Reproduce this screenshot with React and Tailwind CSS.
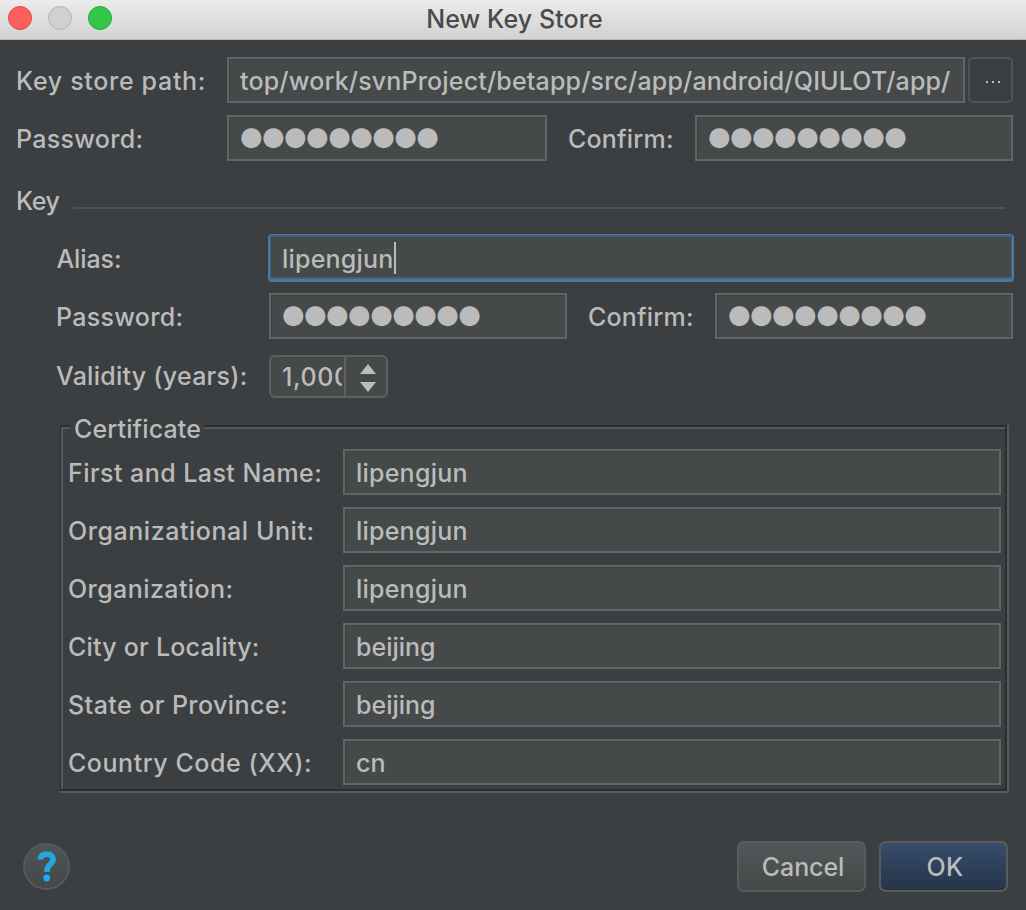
const FIELD =
  "flex h-[46px] items-center overflow-hidden whitespace-nowrap border-2 border-[#646464] bg-[#45494a] pl-[11px] pt-0.5 shadow-[inset_1px_1px_0_#3e4243]";

function Field({ className, children }) {
  return <div className={`${FIELD} ${className}`}>{children}</div>;
}

function Dots() {
  return (
    <span className="-mt-[6px] font-['DejaVu_Sans',sans-serif] text-[26px] leading-[30px] tracking-[-0.65px]">
      ●●●●●●●●●
    </span>
  );
}

function Label({ className, children }) {
  return <span className={`shrink-0 whitespace-pre ${className}`}>{children}</span>;
}

const CERT_ROWS = [
  ["First and Last Name:", "tracking-[0.45px] pl-[5px]", "lipengjun", "tracking-[0.22px]"],
  ["Organizational Unit:", "tracking-[0.55px] pl-[5px]", "lipengjun", "tracking-[0.22px]"],
  ["Organization:", "tracking-[0.42px] pl-[5px]", "lipengjun", "tracking-[0.22px]"],
  ["City or Locality:", "tracking-[0.22px] pl-[5px]", "beijing", "tracking-[0px]"],
  ["State or Province:", "tracking-[0.43px] pl-[5px]", "beijing", "tracking-[0px]"],
  ["Country Code (XX):", "tracking-[0.54px] pl-[5px]", "cn", "tracking-[0px]"],
];

function TitleBar() {
  return (
    <header className="grid h-10 grid-cols-[1fr_auto_1fr] border-b border-[#b4b4b4] bg-linear-to-b from-[#ebebeb] to-[#d2d2d2]">
      <div className="flex gap-4 pl-2 pt-1.5">
        <span className="size-6 rounded-full border border-[#e2463f] bg-[#fc605b]" />
        <span className="size-6 rounded-full border border-[#b4b4b4] bg-[#d0d0d0]" />
        <span className="size-6 rounded-full border border-[#1fa833] bg-[#34c84a]" />
      </div>
      <h1 className="pl-[3px] font-[450] leading-[39px] tracking-[0.1px] text-[#4a4a4a]">New Key Store</h1>
    </header>
  );
}

function Certificate() {
  return (
    <section className="relative ml-[60px] mt-[27px] h-[368px] w-[949px] border-b-2 border-r-2 border-[#555a5c]">
      <div className="h-full border-2 border-l border-[#2b2d2e]">
        <div className="flex h-full flex-col gap-3 border-l-2 border-t-2 border-[#555a5c] pt-5">
          {CERT_ROWS.map(([label, labelClass, value, valueClass]) => (
            <div key={label} className="flex items-center">
              <Label className={`mt-0.5 w-[280px] ${labelClass}`}>{label}</Label>
              <Field className={`w-[658px] ${valueClass}`}>{value}</Field>
            </div>
          ))}
        </div>
      </div>
      <h2 className="absolute left-[10px] -top-[11px] w-[134px] bg-[#3c3f41] pl-[4px] font-[450] tracking-[0.13px]">
        Certificate
      </h2>
    </section>
  );
}

export default function App() {
  return (
    <div className="flex h-[910px] w-[1026px] flex-col overflow-hidden bg-[#3c3f41] font-[Inter,sans-serif] text-[25px] font-[450] leading-[30px] text-[#bbbbbb]">
      <TitleBar />
      <main className="flex flex-col pt-[17px]">
        <div className="flex items-center pl-4">
          <Label className="mt-0.5 w-[211px] tracking-[0.68px]">Key store path:</Label>
          <Field className="w-[738px] tracking-[0.16px]">
            top/work/svnProject/betapp/src/app/android/QIULOT/app/
          </Field>
          <button className="ml-[3px] flex h-[46px] w-[45px] items-center justify-center gap-1 rounded-[5px] border-2 border-[#515354] pl-1 pt-1">
            <span className="size-0.5 bg-[#bbbbbb]" />
            <span className="size-0.5 bg-[#bbbbbb]" />
            <span className="size-0.5 bg-[#bbbbbb]" />
          </button>
        </div>
        <div className="mt-3 flex items-center pl-4">
          <Label className="mt-0.5 w-[211px] tracking-[0.3px]">Password:</Label>
          <Field className="w-[320px]"><Dots /></Field>
          <Label className="mt-0.5 w-[148px] pl-[21px] tracking-[0.2px]">Confirm:</Label>
          <Field className="w-[318px]"><Dots /></Field>
        </div>

        <div className="mt-[25px] flex h-[30px] items-center pl-4">
          <Label className="w-[57px] tracking-[-0.5px]">Key</Label>
          <div className="mt-[13px] h-0.5 w-[932px] bg-[#515151]" />
        </div>

        <div className="mt-[18px] flex items-center pl-[56.5px]">
          <Label className="mt-0.5 w-[211.5px] tracking-[-0.1px]">Alias:</Label>
          <div className="h-12 w-[746px] rounded-[4px] border-x-2 border-b-[3px] border-t border-[#4a78a8] bg-[#45494a]">
            <div className="flex h-full items-center border-x border-y-2 border-[#466173] pl-[11px]">
              <span className="mt-[3px] tracking-[0.2px]">lipengjun</span>
              <span className="mt-px h-8 w-0.5 bg-[#bbbbbb]" />
            </div>
          </div>
        </div>
        <div className="mt-[11px] flex items-center pl-14">
          <Label className="mt-0.5 w-[213px] tracking-[0.3px]">Password:</Label>
          <Field className="w-[298px]"><Dots /></Field>
          <Label className="mt-0.5 w-[148px] pl-[21px] tracking-[0.2px]">Confirm:</Label>
          <Field className="w-[298px]"><Dots /></Field>
        </div>
        <div className="mt-4 flex items-center pl-14">
          <Label className="-mt-px w-[213px] tracking-[0.26px]">Validity (years):</Label>
          <div className="flex h-[43px] w-[119px] rounded-[6px] border-2 border-[#5f6060] bg-[#45494a]">
            <div className="w-[71px] overflow-hidden pl-[11px] leading-[41px] tracking-[0.6px]">1,000</div>
            <div className="ml-[2px] flex flex-1 items-center justify-center border-l-2 border-[#5e6060] pl-[4px] pt-0.5">
              <svg width="16" height="28" viewBox="0 0 16 28" fill="#bbbbbb">
                <path d="M8 0 16 10H0ZM0 18H16L8 28Z" />
              </svg>
            </div>
          </div>
        </div>

        <Certificate />
      </main>

      <footer className="mt-12 flex items-center pl-[23px] pr-[18px]">
        <button className="flex size-[47px] items-center justify-center rounded-full border-2 border-[#565959] bg-linear-to-b from-[#4f5557] to-[#434849]">
          <svg width="20" height="31" viewBox="0 0 20 31" fill="none">
            <path d="M3.3 8.6C3.3 5 5.8 3.1 9.8 3.1C13.6 3.1 16 5 16 8.2C16 11 14.4 12.3 12.5 14C10.7 15.7 9.9 17 9.9 21" stroke="#22a7e4" strokeWidth="5.6" />
            <circle cx="9.7" cy="27" r="3.4" fill="#1badf0" />
          </svg>
        </button>
        <button className="ml-auto h-[51px] w-[129px] rounded-[7px] border-2 border-[#595c5d] bg-linear-to-b from-[#525759] to-[#434848] pl-[3px] pt-px tracking-[-0.1px]">
          Cancel
        </button>
        <button className="ml-[13px] h-[51px] w-[129px] rounded-[7px] border-2 border-[#595c5d] bg-linear-to-b from-[#374d6c] to-[#253549] pl-[3px] pt-px tracking-[0.2px]">
          OK
        </button>
      </footer>
    </div>
  );
}
